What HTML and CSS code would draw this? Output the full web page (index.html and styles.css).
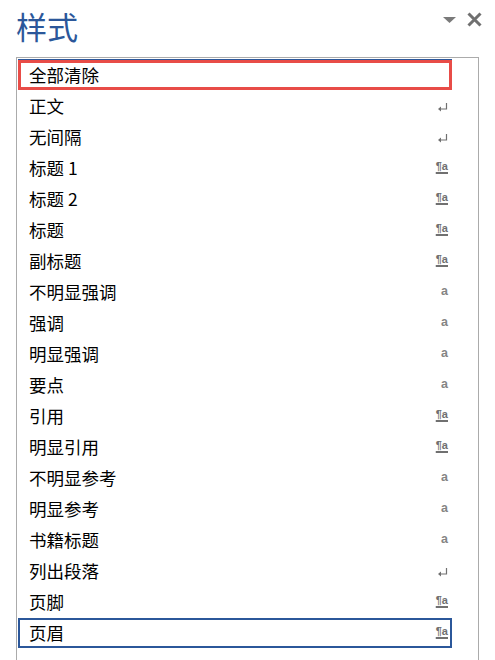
FILE: index.html
```html
<!DOCTYPE html>
<html lang="zh-CN">
<head>
  <meta charset="UTF-8">
  <meta name="viewport" content="width=device-width, initial-scale=1.0">
  <title>样式</title>
  <link rel="stylesheet" href="styles.css">
</head>
<body>

  <div class="pane">
    <div class="header">
      <h1>样式</h1>
      <div class="tools">
        <svg class="drop" width="13" height="6" viewBox="0 0 13 6"><path d="M0 0h13L6.5 6z" fill="#7a7a7a"/></svg>
        <svg class="close" width="15" height="15" viewBox="0 0 15 15"><path d="M1.5 1.5l12 12M13.5 1.5l-12 12" stroke="#707070" stroke-width="3"/></svg>
      </div>
    </div>

    <div class="list">
      <div class="row clear"><span class="name">全部清除</span></div>
      <div class="row"><span class="name">正文</span><span class="mark ret"><svg width="10" height="9" viewBox="0 0 10 9"><path d="M8.5 0v6H2" stroke="#707070" stroke-width="1.2" fill="none"/><path d="M0 6l3-2.5v5z" fill="#707070"/></svg></span></div>
      <div class="row"><span class="name">无间隔</span><span class="mark ret"><svg width="10" height="9" viewBox="0 0 10 9"><path d="M8.5 0v6H2" stroke="#707070" stroke-width="1.2" fill="none"/><path d="M0 6l3-2.5v5z" fill="#707070"/></svg></span></div>
      <div class="row"><span class="name">标题 1</span><span class="mark para">¶a</span></div>
      <div class="row"><span class="name">标题 2</span><span class="mark para">¶a</span></div>
      <div class="row"><span class="name">标题</span><span class="mark para">¶a</span></div>
      <div class="row"><span class="name">副标题</span><span class="mark para">¶a</span></div>
      <div class="row"><span class="name">不明显强调</span><span class="mark char">a</span></div>
      <div class="row"><span class="name">强调</span><span class="mark char">a</span></div>
      <div class="row"><span class="name">明显强调</span><span class="mark char">a</span></div>
      <div class="row"><span class="name">要点</span><span class="mark char">a</span></div>
      <div class="row"><span class="name">引用</span><span class="mark para">¶a</span></div>
      <div class="row"><span class="name">明显引用</span><span class="mark para">¶a</span></div>
      <div class="row"><span class="name">不明显参考</span><span class="mark char">a</span></div>
      <div class="row"><span class="name">明显参考</span><span class="mark char">a</span></div>
      <div class="row"><span class="name">书籍标题</span><span class="mark char">a</span></div>
      <div class="row"><span class="name">列出段落</span><span class="mark ret"><svg width="10" height="9" viewBox="0 0 10 9"><path d="M8.5 0v6H2" stroke="#707070" stroke-width="1.2" fill="none"/><path d="M0 6l3-2.5v5z" fill="#707070"/></svg></span></div>
      <div class="row"><span class="name">页脚</span><span class="mark para">¶a</span></div>
      <div class="row current"><span class="name">页眉</span><span class="mark para">¶a</span></div>
    </div>
  </div>

</body>
</html>
```

FILE: styles.css
```css
body {
  margin: 0;
  background-color: #ffffff;
  font-family: "Noto Sans CJK SC", "Noto Sans", sans-serif;
  overflow: hidden;
}

.pane {
  width: 495px;
  height: 660px;
}

.header {
  display: flex;
  height: 57px;
  padding: 10px 0 0 16px;
  box-sizing: border-box;
}

h1 {
  margin: 0;
  font-size: 31px;
  line-height: 31px;
  font-weight: normal;
  color: #2b579a;
}

.tools {
  margin-left: auto;
  margin-right: 13px;
  display: flex;
  align-items: flex-start;
}

.drop {
  margin-top: 7px;
  margin-right: 11px;
}

.close {
  margin-top: 2px;
}

.list {
  margin-left: 16px;
  width: 463px;
  height: 603px;
  border: 1px solid #ababab;
  border-bottom: none;
  padding: 2px 26px 0 1px;
  box-sizing: border-box;
}

.row {
  display: flex;
  align-items: center;
  height: 30px;
  margin-bottom: 1px;
  padding: 0 2px 2px 9px;
  border: 2px solid transparent;
  box-sizing: border-box;
  font-size: 17.5px;
  color: #000000;
}

.row.clear {
  border: 3px solid #e84c47;
  padding-left: 8px;
  box-shadow: 0 -1px 0 #2b579a;
}

.row.current {
  border-color: #2b579a;
}

.mark {
  margin-left: auto;
  width: 14px;
  display: flex;
  justify-content: flex-end;
  color: #707070;
  font-family: "Liberation Sans", sans-serif;
  font-size: 11px;
  line-height: 11px;
}

.mark.ret {
  margin-top: 4px;
}

.mark.para {
  font-weight: bold;
  text-decoration: underline;
  text-decoration-thickness: 2px;
  text-underline-offset: 2px;
  margin-top: -1px;
}

.mark.char {
  margin-top: 0;
  font-size: 12.5px;
  font-weight: bold;
  color: #858585;
}
```
